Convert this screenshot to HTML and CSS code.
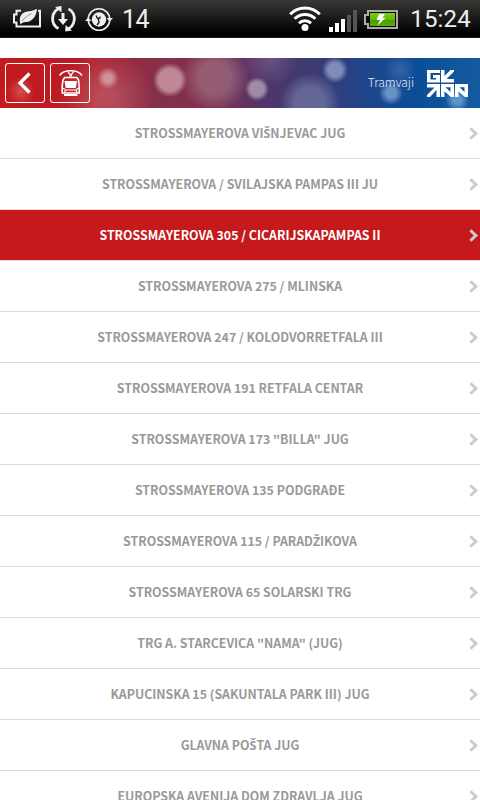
FILE: index.html
```html
<!DOCTYPE html>
<html lang="hr">
<head>
  <meta charset="UTF-8" />
  <meta name="viewport" content="width=device-width, initial-scale=1.0" />
  <title>Tramvaji</title>
  <link rel="stylesheet" href="styles.css">
</head>
<body>
  <div class="statusbar">
    <div class="status-left">
      <svg class="ic-eco" width="30" height="20" viewBox="0 0 30 20">
        <path d="M9 1.700H4.500V5.500H2V13.500H4.500V17.500H28V1.700H26" fill="none" stroke="#eee" stroke-width="2"/>
        <path d="M8 13.500C7 7 10 3.500 15 2.500C19 2 22 1.500 25 -0.500C24.500 7 21 12 15 13C12.500 13.300 11.500 12.500 8.500 15.500Z" fill="#eee"/>
        <path d="M10 12C12.500 8.500 15.500 7 19.500 4.500" fill="none" stroke="#777" stroke-width="0.800"/>
      </svg>
      <svg class="ic-sync" width="28" height="28" viewBox="0 0 28 28">
        <path d="M10.500 2.900A11.300 11.300 0 0 0 8.500 23.600M15.500 24.800A11.300 11.300 0 0 0 18.500 3.900" fill="none" stroke="#eee" stroke-width="2.800"/>
        <path d="M5 2L11.500 1V7.500ZM22 25.500L15.500 26.500V20Z" fill="#eee"/>
        <path d="M11.500 8H14.500V14H18L13 20L8 14H11.500Z" fill="#eee"/>
      </svg>
      <svg class="ic-target" width="28" height="26" viewBox="0 0 28 26">
        <circle cx="14" cy="12.500" r="10.800" fill="none" stroke="#eee" stroke-width="1.600"/>
        <circle cx="14" cy="12.500" r="7.200" fill="#eee"/>
        <path d="M0 14L3.200 10.500L6.500 14ZM21.500 11H28L24.700 14.500Z" fill="#eee"/>
        <path d="M11 8.500L12.500 11.500L15 11V9.500M13.500 12L14 15.500L12 18" fill="none" stroke="#111" stroke-width="1.300"/>
      </svg>
      <span class="temp">14</span>
    </div>
    <div class="status-right">
      <svg class="ic-wifi" width="32" height="27" viewBox="0 0 32 27">
        <g fill="none" stroke="#fff" stroke-width="3">
          <path d="M1.200 9.300A20.500 20.500 0 0 1 30.800 9.300"/>
          <path d="M5.600 13.800A14.500 14.500 0 0 1 26.400 13.800"/>
          <path d="M10 18.200A8.500 8.500 0 0 1 22 18.200"/>
        </g>
        <circle cx="16" cy="22.500" r="3.500" fill="#fff"/>
      </svg>
      <svg class="ic-signal" width="28" height="22" viewBox="0 0 28 22">
        <path d="M0 17H4V22H0ZM6 13H10V22H6ZM12 9H16V22H12Z" fill="#fff"/>
        <path d="M18 5H22V22H18ZM24 0H28V22H24Z" fill="#555"/>
      </svg>
      <svg class="ic-battery" width="34" height="20" viewBox="0 0 34 20">
        <defs>
          <linearGradient id="charge" x1="0" y1="0" x2="0" y2="1">
            <stop offset="0" stop-color="#7ccc12"/>
            <stop offset="0.500" stop-color="#64b80a"/>
            <stop offset="0.510" stop-color="#479a00"/>
            <stop offset="1" stop-color="#5aaa08"/>
          </linearGradient>
        </defs>
        <path d="M4 1H33V18H4V14H1V5H4Z" fill="#0a0a0a" stroke="#aaa" stroke-width="2"/>
        <rect x="6" y="3" width="25" height="13" fill="url(#charge)"/>
        <path d="M15 4H21L18.500 8H21.500L13.500 15.500L16 10H12.500Z" fill="#fff"/>
      </svg>
      <span class="clock">15:24</span>
    </div>
  </div>

  <header class="header">
    <div class="nav">
      <a class="nav-btn" href="#">
        <svg width="38" height="38" viewBox="0 0 38 38">
          <path d="M23.500 9.500L14 19L23.500 28.500" fill="none" stroke="#fff" stroke-width="3.300"/>
        </svg>
      </a>
      <a class="nav-btn" href="#">
        <svg width="38" height="38" viewBox="0 0 38 38">
          <g fill="none" stroke="#fff">
            <path d="M8.500 11.500C11 8 15 6.800 19.700 6.800S28.500 8 31 11.500" stroke-width="1.500"/>
            <path d="M17 8L21 12.500M22.500 8L18.500 12.500" stroke-width="1.200"/>
            <path d="M13.500 13.500H26L27.500 16L28.200 22V29H11.200V22L12 16Z" stroke-width="1.600"/>
            <path d="M11.500 24L14.500 25.500M28 24L25 25.500M13.500 28.500L14.500 26H25L26 28.500" stroke-width="1.200"/>
            <path d="M13 31H26.500" stroke-width="2"/>
          </g>
          <path d="M13.500 17H26L24.800 24H14.700Z" fill="#fff"/>
        </svg>
      </a>
    </div>
    <div class="brand">
      <span class="title">Tramvaji</span>
      <svg class="logo" width="41" height="27" viewBox="0 0 41 27">
        <g fill="#fff">
          <path d="M0 0H13V3H3.500V9.500H9V8H6V5H13V12.500H0Z"/>
          <path d="M14 0H17.500V6L23.500 0H27V1.500L19.500 9H27V12.500H14Z"/>
          <path d="M0 14H13V27H9.500V20L3 27H0V25L7.500 17.500H0Z"/>
          <path fill-rule="evenodd" d="M14 14H27V27H24L17.500 21.500V27H14ZM18.500 17.300L23.500 22V17.300Z"/>
          <path fill-rule="evenodd" d="M28 14H41V27H38L31.500 21.500V27H28ZM32.500 17.300L37.500 22V17.300Z"/>
        </g>
      </svg>
    </div>
  </header>

  <ul class="stops">
    <li class="stop">STROSSMAYEROVA VI<span class="caron">Š</span>NJEVAC JUG</li>
    <li class="stop">STROSSMAYEROVA / SVILAJSKA PAMPAS III JU</li>
    <li class="stop active">STROSSMAYEROVA 305 / CICARIJSKAPAMPAS II</li>
    <li class="stop">STROSSMAYEROVA 275 / MLINSKA</li>
    <li class="stop">STROSSMAYEROVA 247 / KOLODVORRETFALA III</li>
    <li class="stop">STROSSMAYEROVA 191 RETFALA CENTAR</li>
    <li class="stop">STROSSMAYEROVA 173 "BILLA" JUG</li>
    <li class="stop">STROSSMAYEROVA 135 PODGRAĐE</li>
    <li class="stop">STROSSMAYEROVA 115 / PARAD<span class="caron">Ž</span>IKOVA</li>
    <li class="stop">STROSSMAYEROVA 65 SOLARSKI TRG</li>
    <li class="stop">TRG A. STARCEVICA "NAMA" (JUG)</li>
    <li class="stop">KAPUCINSKA 15 (SAKUNTALA PARK III) JUG</li>
    <li class="stop">GLAVNA PO<span class="caron">Š</span>TA JUG</li>
    <li class="stop">EUROPSKA AVENIJA DOM ZDRAVLJA JUG</li>
  </ul>
</body>
</html>
```
FILE: styles.css
```css
body {
  margin: 0;
  height: 800px;
  overflow: hidden;
  background: #fff;
  font-family: "Noto Sans CJK SC", "Open Sans", sans-serif;
}

svg {
  display: block;
  flex: none;
}

.statusbar {
  display: flex;
  justify-content: space-between;
  height: 38px;
  box-sizing: border-box;
  border-bottom: 1px solid #1c1c1c;
  background: linear-gradient(#393937, #000 90%);
  color: #eee;
  font-family: Roboto, sans-serif;
  line-height: 39px;
}

.status-left,
.status-right {
  display: flex;
  align-items: flex-start;
}

.status-left {
  padding-left: 12px;
}

.status-right {
  padding-right: 9px;
}

.ic-eco {
  margin-top: 9px;
}

.ic-sync {
  margin: 5px 0 0 8px;
}

.ic-target {
  margin: 7px 0 0 7px;
}

.temp {
  margin-left: 9px;
  font-size: 25px;
  letter-spacing: -0.5px;
}

.ic-wifi {
  margin-top: 5px;
}

.ic-signal {
  margin: 10px 0 0 8px;
}

.ic-battery {
  margin: 10px 0 0 7px;
}

.clock {
  margin-left: 12px;
  font-size: 24px;
  letter-spacing: 0.2px;
}

.header {
  display: flex;
  justify-content: space-between;
  height: 50px;
  margin-top: 20px;
  background:
    radial-gradient(circle at 21px 33px, rgba(255, 200, 200, 0.3), transparent 14px),
    radial-gradient(circle at 108px 20px, rgba(230, 200, 205, 0.6) 4px, transparent 11px),
    radial-gradient(circle at 170px 22px, rgba(215, 170, 180, 0.72) 11px, transparent 17px),
    radial-gradient(circle at 257px 31px, rgba(190, 175, 195, 0.7) 7px, transparent 12px),
    radial-gradient(circle at 335px 12px, rgba(170, 180, 215, 0.65) 7px, transparent 13px),
    radial-gradient(circle at 391px 35px, rgba(150, 185, 225, 0.65) 5px, transparent 12px),
    radial-gradient(circle at 457px 42px, rgba(130, 185, 230, 0.65) 4px, transparent 12px),
    radial-gradient(circle at 400px 12px, rgba(120, 150, 205, 0.35), transparent 16px),
    radial-gradient(circle at 215px 20px, rgba(180, 160, 165, 0.4) 16px, transparent 34px),
    radial-gradient(circle at 310px 45px, rgba(130, 140, 180, 0.55) 15px, transparent 30px),
    radial-gradient(circle at 270px 0, rgba(150, 130, 165, 0.4), transparent 28px),
    radial-gradient(circle at 106px 40px, rgba(220, 150, 160, 0.35) 8px, transparent 48px),
    linear-gradient(90deg, #c41a1c, #b81c26 16%, #85304a 33%, #802e50 45%, #50356a 55%, #3b3b72 66%, #20458a 76%, #0c4d98 87%, #155b9f);
}

.nav {
  display: flex;
  gap: 5px;
  padding: 5px;
}

.nav-btn {
  width: 38px;
  height: 38px;
  border: 1px solid #fff;
  border-radius: 3px;
}

.brand {
  display: flex;
  align-items: flex-start;
  padding-right: 12px;
}

.title {
  color: #e6ecf6;
  font-size: 12px;
  font-weight: 300;
  line-height: 48px;
}

.logo {
  margin: 12px 0 0 13px;
}

.stops {
  margin: 0;
  padding: 0;
  list-style: none;
}

.stop {
  position: relative;
  height: 50px;
  border-bottom: 1px solid #d9d9d9;
  color: #999;
  font-size: 12.35px;
  font-weight: 700;
  line-height: 50px;
  text-align: center;
  white-space: nowrap;
}

.stop::after {
  content: "";
  position: absolute;
  top: 21px;
  right: 4px;
  width: 6px;
  height: 6px;
  border: solid #ccc;
  border-width: 3px 3px 0 0;
  transform: rotate(45deg);
}

.caron {
  font-family: "Open Sans", sans-serif;
  font-weight: 700;
  line-height: 1;
}

.active {
  background: #c6191b;
  color: #fff;
}
```
